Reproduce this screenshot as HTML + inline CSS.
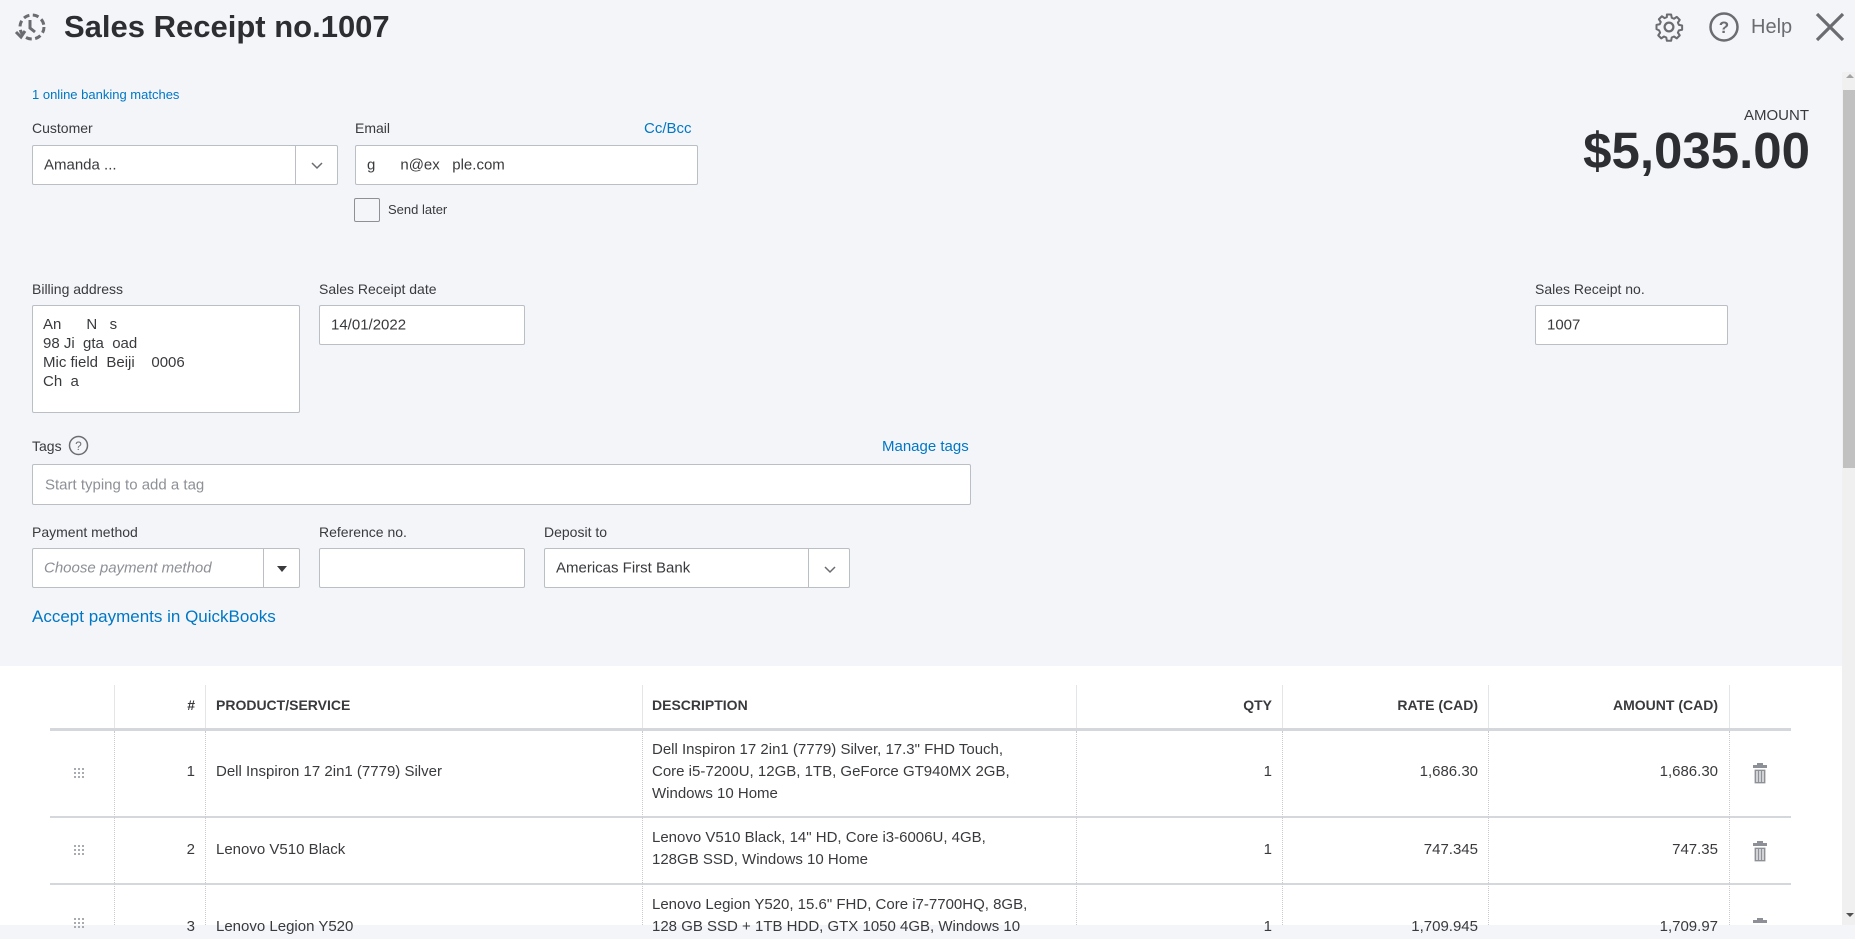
<!DOCTYPE html>
<html><head><meta charset="utf-8"><style>
*{margin:0;padding:0;box-sizing:border-box}
body{width:1855px;height:925px;overflow:hidden;background:#f4f5f8;font-family:"Liberation Sans",sans-serif;color:#393a3d;position:relative}
.a{position:absolute;white-space:nowrap}
.lbl{font-size:14px;color:#393a3d}
.lnk{color:#0077c5}
.in{position:absolute;background:#fff;border:1px solid #babec5;border-radius:2px;font-size:15px;color:#393a3d}
.in span{position:absolute;left:11px;top:50%;transform:translateY(-50%)}
.dd{position:absolute;top:0;bottom:0;border-left:1px solid #babec5}
.th{position:absolute;font-size:14px;font-weight:bold;color:#393a3d;top:697px}
.tx{position:absolute;font-size:15px;color:#393a3d;line-height:22px;white-space:nowrap}
.r{text-align:right}
</style></head><body>
<svg class="a" style="left:14px;top:11px" width="34" height="32" viewBox="0 0 34 32"><circle cx="18" cy="16" r="12" fill="none" stroke="#6b6c72" stroke-width="3" stroke-dasharray="6 3.5"/><path d="M16 9v8l5 4" fill="none" stroke="#6b6c72" stroke-width="3"/><path d="M2 21l5 5 4-6" fill="none" stroke="#6b6c72" stroke-width="3"/></svg>
<div class="a" style="left:64px;top:9px;font-size:31px;font-weight:bold;color:#2d2e31">Sales Receipt no.1007</div>
<svg class="a" style="left:1654px;top:12px" width="30" height="30" viewBox="0 0 24 24"><path d="M12 8.5a3.5 3.5 0 1 0 0 7a3.5 3.5 0 1 0 0-7z" fill="none" stroke="#6b6c72" stroke-width="1.8"/><path d="M10.3 2h3.4l.5 2.6 1.8.8 2.2-1.5 2.4 2.4-1.5 2.2.8 1.8 2.6.5v3.4l-2.6.5-.8 1.8 1.5 2.2-2.4 2.4-2.2-1.5-1.8.8-.5 2.6h-3.4l-.5-2.6-1.8-.8-2.2 1.5-2.4-2.4 1.5-2.2-.8-1.8L2 13.7v-3.4l2.6-.5.8-1.8-1.5-2.2 2.4-2.4 2.2 1.5 1.8-.8z" fill="none" stroke="#6b6c72" stroke-width="1.6" stroke-linejoin="round"/></svg>
<svg class="a" style="left:1708px;top:11px" width="32" height="32" viewBox="0 0 32 32"><circle cx="16" cy="16" r="13.5" fill="none" stroke="#6b6c72" stroke-width="2.5"/><text x="16" y="22" text-anchor="middle" font-family="Liberation Sans" font-size="17" font-weight="bold" fill="#6b6c72">?</text></svg>
<div class="a" style="left:1751px;top:16px;font-size:20px;color:#6b6c72">Help</div>
<svg class="a" style="left:1814px;top:11px" width="32" height="32" viewBox="0 0 32 32"><path d="M3 3L29 29M29 3L3 29" stroke="#6b6c72" stroke-width="3.2"/></svg>
<div class="a" style="left:1842px;top:72px;width:13px;height:853px;background:#f0f0f0"></div>
<div class="a" style="left:1843px;top:90px;width:12px;height:378px;background:#c1c1c1"></div>
<div class="a" style="left:1846px;top:74px;width:0;height:0;border-left:4px solid transparent;border-right:4px solid transparent;border-bottom:4px solid #a3a3a3"></div>
<div class="a" style="left:1846px;top:913px;width:0;height:0;border-left:4px solid transparent;border-right:4px solid transparent;border-top:4px solid #505050"></div>

<div class="a lnk" style="left:32px;top:87px;font-size:13px">1 online banking matches</div>
<div class="a lbl" style="left:32px;top:120px">Customer</div>
<div class="in" style="left:32px;top:145px;width:306px;height:40px"><span>Amanda ...</span><div class="dd" style="left:262px"></div><svg class="a" style="left:277px;top:15px" width="14" height="9" viewBox="0 0 14 9"><path d="M2 2l5 5 5-5" fill="none" stroke="#6b6c72" stroke-width="1.5"/></svg></div>
<div class="a lbl" style="left:355px;top:120px">Email</div>
<div class="a lnk" style="left:644px;top:120px;font-size:15px">Cc/Bcc</div>
<div class="in" style="left:355px;top:145px;width:343px;height:40px"><span>g&nbsp;&nbsp;&nbsp;&nbsp;&nbsp;&nbsp;n@ex&nbsp;&nbsp;&nbsp;ple.com</span></div>
<div class="a" style="left:354px;top:198px;width:26px;height:24px;border:1px solid #8d9096;border-radius:2px;background:#f4f5f8"></div>
<div class="a" style="left:388px;top:202px;font-size:13px">Send later</div>

<div class="a" style="left:1700px;top:107px;width:109px;text-align:right;font-size:15px;color:#393a3d">AMOUNT</div>
<div class="a" style="left:1480px;top:121px;width:330px;text-align:right;font-size:51px;font-weight:bold;color:#2d2e31">$5,035.00</div>

<div class="a lbl" style="left:32px;top:281px">Billing address</div>
<div class="in" style="left:32px;top:305px;width:268px;height:108px"><div style="position:absolute;left:10px;top:9px;line-height:19px;font-size:15px">An&nbsp;&nbsp;&nbsp;&nbsp;&nbsp;&nbsp;N&nbsp;&nbsp;&nbsp;s<br>98 Ji&nbsp;&nbsp;gta&nbsp;&nbsp;oad<br>Mic field&nbsp;&nbsp;Beiji&nbsp;&nbsp;&nbsp;&nbsp;0006<br>Ch&nbsp;&nbsp;a</div></div>
<div class="a lbl" style="left:319px;top:281px">Sales Receipt date</div>
<div class="in" style="left:319px;top:305px;width:206px;height:40px"><span>14/01/2022</span></div>
<div class="a lbl" style="left:1535px;top:281px">Sales Receipt no.</div>
<div class="in" style="left:1535px;top:305px;width:193px;height:40px"><span>1007</span></div>

<div class="a lbl" style="left:32px;top:438px">Tags</div>
<svg class="a" style="left:68px;top:435px" width="21" height="21" viewBox="0 0 21 21"><circle cx="10.5" cy="10.5" r="9" fill="none" stroke="#6b6c72" stroke-width="1.5"/><text x="10.5" y="15" text-anchor="middle" font-family="Liberation Sans" font-size="12" fill="#6b6c72">?</text></svg>
<div class="a lnk" style="left:882px;top:438px;font-size:15px">Manage tags</div>
<div class="in" style="left:32px;top:464px;width:939px;height:41px"><span style="color:#8d9096;left:12px">Start typing to add a tag</span></div>

<div class="a lbl" style="left:32px;top:524px">Payment method</div>
<div class="in" style="left:32px;top:548px;width:268px;height:40px"><span style="color:#8d9096;font-style:italic">Choose payment method</span><div class="dd" style="left:230px"></div><div class="a" style="left:244px;top:17px;border-left:5px solid transparent;border-right:5px solid transparent;border-top:6px solid #393a3d"></div></div>
<div class="a lbl" style="left:319px;top:524px">Reference no.</div>
<div class="in" style="left:319px;top:548px;width:206px;height:40px"></div>
<div class="a lbl" style="left:544px;top:524px">Deposit to</div>
<div class="in" style="left:544px;top:548px;width:306px;height:40px"><span>Americas First Bank</span><div class="dd" style="left:263px"></div><svg class="a" style="left:278px;top:16px" width="14" height="9" viewBox="0 0 14 9"><path d="M2 2l5 5 5-5" fill="none" stroke="#6b6c72" stroke-width="1.5"/></svg></div>
<div class="a lnk" style="left:32px;top:607px;font-size:17px">Accept payments in QuickBooks</div>

<div class="a" style="left:0;top:666px;width:1842px;height:259px;background:#fff"></div>
<div class="a" style="left:50px;top:728px;width:1741px;height:3px;background:#d4d7dc"></div>
<div class="a" style="left:50px;top:816px;width:1741px;height:2px;background:#d4d7dc"></div>
<div class="a" style="left:50px;top:883px;width:1741px;height:2px;background:#d4d7dc"></div>
<div class="a" style="left:114px;top:685px;width:1px;height:43px;background:#e3e5e8"></div>
<div class="a" style="left:205px;top:685px;width:1px;height:43px;background:#e3e5e8"></div>
<div class="a" style="left:642px;top:685px;width:1px;height:43px;background:#e3e5e8"></div>
<div class="a" style="left:1076px;top:685px;width:1px;height:43px;background:#e3e5e8"></div>
<div class="a" style="left:1282px;top:685px;width:1px;height:43px;background:#e3e5e8"></div>
<div class="a" style="left:1488px;top:685px;width:1px;height:43px;background:#e3e5e8"></div>
<div class="a" style="left:1729px;top:685px;width:1px;height:43px;background:#e3e5e8"></div>
<div class="a" style="left:114px;top:731px;height:194px;border-left:1px dotted #c8cacf"></div>
<div class="a" style="left:205px;top:731px;height:194px;border-left:1px dotted #c8cacf"></div>
<div class="a" style="left:642px;top:731px;height:194px;border-left:1px dotted #c8cacf"></div>
<div class="a" style="left:1076px;top:731px;height:194px;border-left:1px dotted #c8cacf"></div>
<div class="a" style="left:1282px;top:731px;height:194px;border-left:1px dotted #c8cacf"></div>
<div class="a" style="left:1488px;top:731px;height:194px;border-left:1px dotted #c8cacf"></div>
<div class="a" style="left:1729px;top:731px;height:194px;border-left:1px dotted #c8cacf"></div>

<div class="th r" style="left:150px;width:45px">#</div>
<div class="th" style="left:216px">PRODUCT/SERVICE</div>
<div class="th" style="left:652px">DESCRIPTION</div>
<div class="th r" style="left:1100px;width:172px">QTY</div>
<div class="th r" style="left:1300px;width:178px">RATE (CAD)</div>
<div class="th r" style="left:1500px;width:218px">AMOUNT (CAD)</div>

<svg width="0" height="0" style="position:absolute"><defs><g id="dg" fill="#a8abb0"><rect x="0" y="0" width="2" height="2"/><rect x="4" y="0" width="2" height="2"/><rect x="8" y="0" width="2" height="2"/><rect x="0" y="4" width="2" height="2"/><rect x="4" y="4" width="2" height="2"/><rect x="8" y="4" width="2" height="2"/><rect x="0" y="8" width="2" height="2"/><rect x="4" y="8" width="2" height="2"/><rect x="8" y="8" width="2" height="2"/></g></defs></svg>
<svg class="a" style="left:74px;top:768px" width="10" height="10"><use href="#dg"/></svg>
<svg class="a" style="left:74px;top:845px" width="10" height="10"><use href="#dg"/></svg>
<svg class="a" style="left:74px;top:918px" width="10" height="10"><use href="#dg"/></svg>

<div class="tx r" style="left:150px;width:45px;top:761px">1</div>
<div class="tx" style="left:216px;top:761px">Dell Inspiron 17 2in1 (7779) Silver</div>
<div class="tx" style="left:652px;top:739px">Dell Inspiron 17 2in1 (7779) Silver, 17.3" FHD Touch,<br>Core i5-7200U, 12GB, 1TB, GeForce GT940MX 2GB,<br>Windows 10 Home</div>
<div class="tx r" style="left:1100px;width:172px;top:761px">1</div>
<div class="tx r" style="left:1300px;width:178px;top:761px">1,686.30</div>
<div class="tx r" style="left:1500px;width:218px;top:761px">1,686.30</div>
<div class="tx r" style="left:150px;width:45px;top:839px">2</div>
<div class="tx" style="left:216px;top:839px">Lenovo V510 Black</div>
<div class="tx" style="left:652px;top:827px">Lenovo V510 Black, 14" HD, Core i3-6006U, 4GB,<br>128GB SSD, Windows 10 Home</div>
<div class="tx r" style="left:1100px;width:172px;top:839px">1</div>
<div class="tx r" style="left:1300px;width:178px;top:839px">747.345</div>
<div class="tx r" style="left:1500px;width:218px;top:839px">747.35</div>
<div class="tx" style="left:652px;top:894px">Lenovo Legion Y520, 15.6" FHD, Core i7-7700HQ, 8GB,<br>128 GB SSD + 1TB HDD, GTX 1050 4GB, Windows 10</div>
<div class="tx r" style="left:150px;width:45px;top:916px">3</div>
<div class="tx" style="left:216px;top:916px">Lenovo Legion Y520</div>
<div class="tx r" style="left:1100px;width:172px;top:916px">1</div>
<div class="tx r" style="left:1300px;width:178px;top:916px">1,709.945</div>
<div class="tx r" style="left:1500px;width:218px;top:916px">1,709.97</div>
<svg class="a" style="left:1752px;top:763px" width="16" height="21" viewBox="0 0 16 21"><rect x="5" y="0" width="6" height="2" fill="#8d9096"/><rect x="1" y="2" width="14" height="3" fill="#8d9096"/><path d="M2 6h12v15H2z M5 8v11 M8 8v11 M11 8v11" fill="#8d9096" stroke="#fff" stroke-width="1.2"/></svg>
<svg class="a" style="left:1752px;top:841px" width="16" height="21" viewBox="0 0 16 21"><rect x="5" y="0" width="6" height="2" fill="#8d9096"/><rect x="1" y="2" width="14" height="3" fill="#8d9096"/><path d="M2 6h12v15H2z M5 8v11 M8 8v11 M11 8v11" fill="#8d9096" stroke="#fff" stroke-width="1.2"/></svg>
<svg class="a" style="left:1752px;top:918px" width="16" height="21" viewBox="0 0 16 21"><rect x="5" y="0" width="6" height="2" fill="#8d9096"/><rect x="1" y="2" width="14" height="3" fill="#8d9096"/></svg>
</body></html>
